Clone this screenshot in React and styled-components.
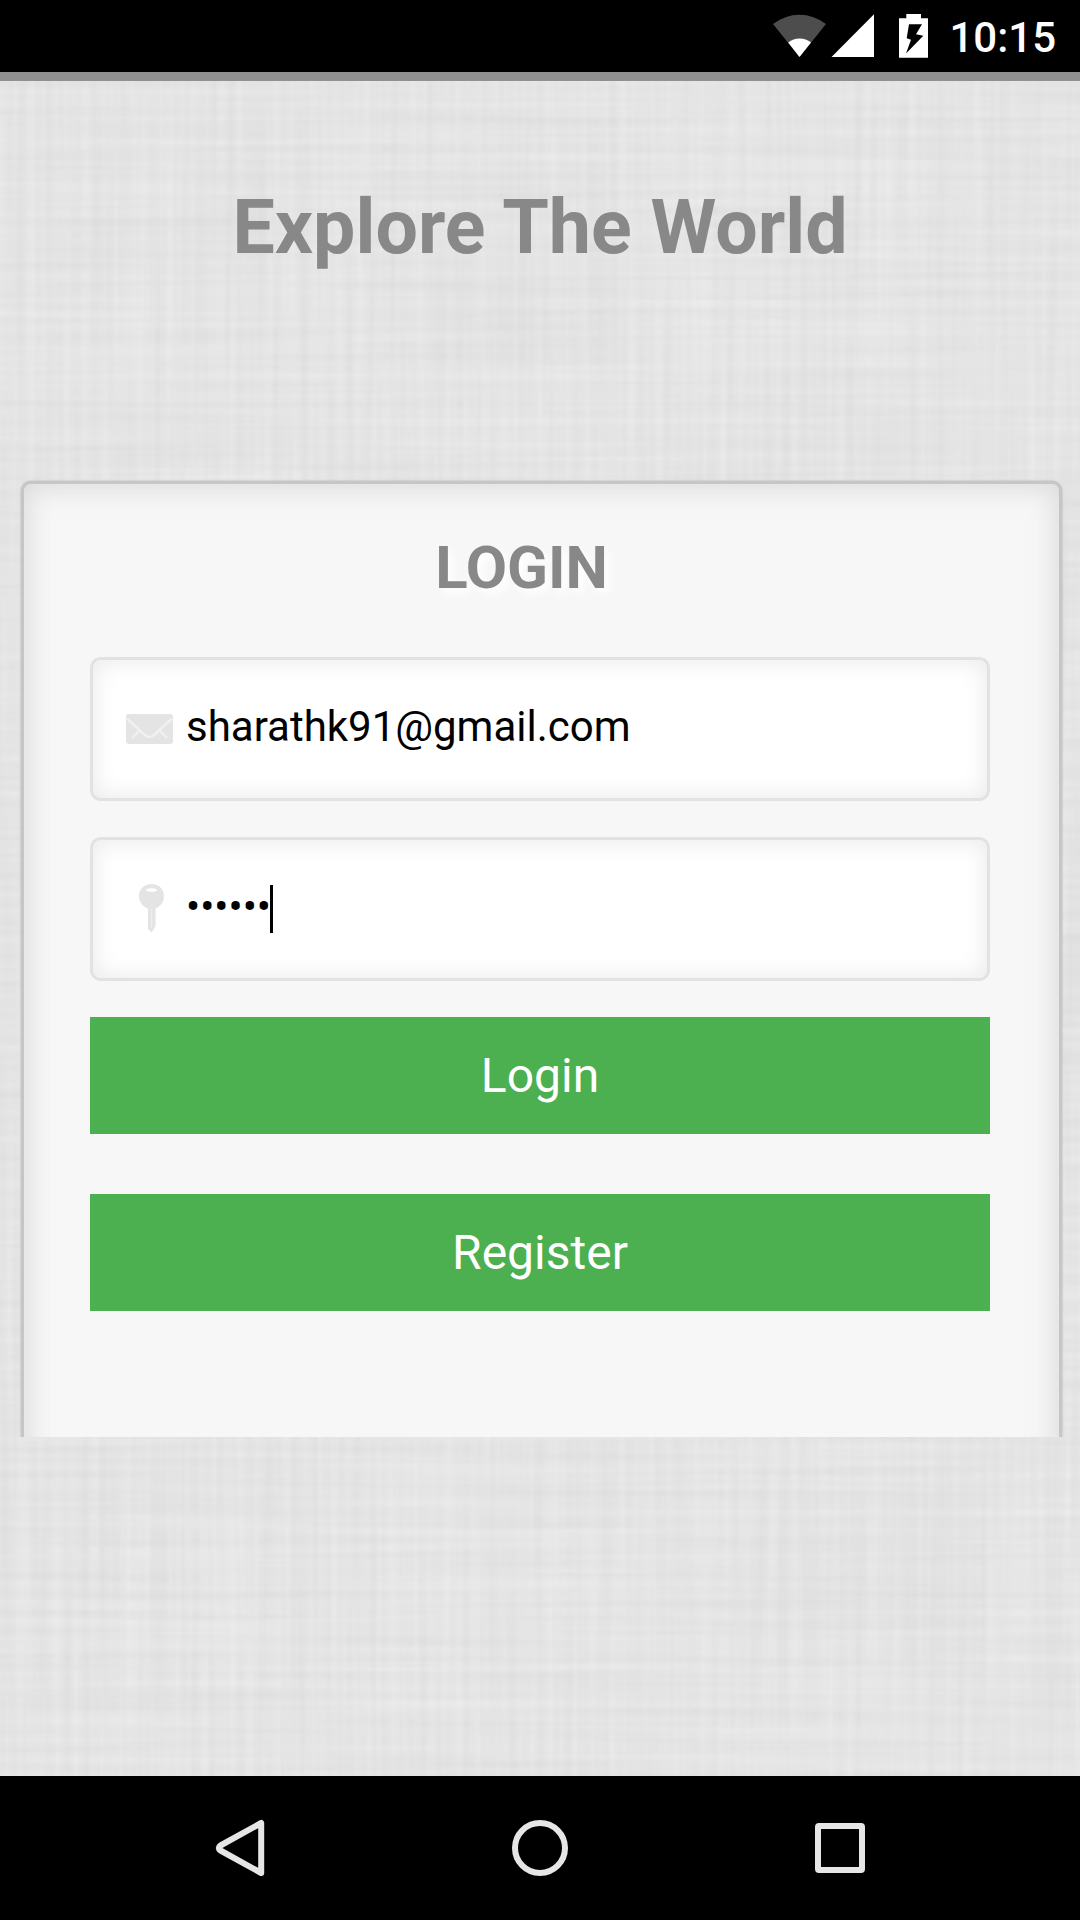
import React from "react";
import styled, { createGlobalStyle } from "styled-components";

const GlobalStyle = createGlobalStyle`
  *, *::before, *::after { box-sizing: border-box; }
  body {
    margin: 0;
    background: #000;
    font-family: Roboto, "Liberation Sans", sans-serif;
  }
`;

const Screen = styled.div`
  display: flex;
  flex-direction: column;
  width: 1080px;
  height: 1920px;
  overflow: hidden;
`;

const StatusBar = styled.header`
  display: flex;
  align-items: center;
  justify-content: flex-end;
  height: 72px;
  padding-right: 24px;
  background: #000;
`;

const StatusIcons = styled.svg`
  width: 156px;
  height: 72px;
  margin-right: 20px;
`;

const Clock = styled.time`
  color: #fff;
  font-size: 42px;
  font-weight: 500;
  line-height: 48px;
  padding-top: 3px;
`;

const Page = styled.main`
  position: relative;
  isolation: isolate;
  display: flex;
  flex-direction: column;
  height: 1704px;
  border-top: 9px solid #909090;
  background: #e4e4e4;
`;

const Linen = styled.svg`
  position: absolute;
  inset: 0;
  z-index: -1;
  width: 100%;
  height: 100%;
`;

const Title = styled.h1`
  margin: 102px 0 0;
  height: 88px;
  color: #888;
  font-size: 75.3px;
  font-weight: 700;
  line-height: 88px;
  text-align: center;
`;

const CardClip = styled.section`
  height: 962px;
  margin-top: 204px;
  padding: 6px 18px 0 21px;
  overflow: hidden;
`;

const Card = styled.form`
  display: flex;
  flex-direction: column;
  width: 1041px;
  height: 1010px;
  padding: 49px 69px 0 66px;
  border: 3px solid #c6c6c6;
  border-radius: 10px;
  background: #f7f7f7;
  box-shadow: 0 0 2px rgba(100, 100, 100, 0.45),
    inset 0 0 24px 6px rgba(200, 200, 200, 0.55);
`;

const Heading = styled.h2`
  margin: 0 37px 0 0;
  height: 70px;
  color: #888;
  font-size: 60px;
  font-weight: 700;
  line-height: 70px;
  text-align: center;
  text-shadow: 5px 5px 8px #fff;
`;

const Field = styled.label`
  display: flex;
  align-items: center;
  height: 144px;
  margin-top: ${(p) => p.$gap}px;
  padding-left: 30px;
  border: 3px solid #e2e2e2;
  border-radius: 11px;
  background: #fff;
  box-shadow: inset 0 0 21px 3px rgba(0, 0, 0, 0.08);
`;

const FieldIcon = styled.svg`
  width: 54px;
  height: 54px;
  margin-right: 9px;
`;

const Value = styled.span`
  color: #000;
  font-size: 42px;
  line-height: 48px;
  padding-bottom: 4px;
`;

const Caret = styled.span`
  width: 3px;
  height: 48px;
  margin-left: -1px;
  background: #000;
`;

const Button = styled.button`
  height: 117px;
  margin: ${(p) => p.$gap}px 0 0;
  padding: 1px 0 0;
  border: 0;
  background: #4caf50;
  color: #fff;
  font-family: inherit;
  font-size: 48px;
  line-height: 56px;
`;

const NavBar = styled.nav`
  display: flex;
  align-items: center;
  justify-content: center;
  gap: 228px;
  height: 144px;
  background: #000;
`;

const NavIcon = styled.svg`
  width: 72px;
  height: 72px;
  fill: none;
  stroke: #e6e6e6;
  stroke-linejoin: round;
`;

function Texture() {
  return (
    <Linen aria-hidden="true">
      <filter
        id="linen"
        x="0"
        y="0"
        width="100%"
        height="100%"
        colorInterpolationFilters="sRGB"
      >
        <feTurbulence type="fractalNoise" baseFrequency="0.11 0.003" numOctaves="2" seed="4" result="warp" />
        <feTurbulence type="fractalNoise" baseFrequency="0.003 0.11" numOctaves="2" seed="9" result="weft" />
        <feComposite in="warp" in2="weft" operator="arithmetic" k2="0.5" k3="0.5" />
        <feColorMatrix
          type="matrix"
          values="0.09 0 0 0 0.85  0.09 0 0 0 0.85  0.09 0 0 0 0.85  0 0 0 0 1"
        />
      </filter>
      <rect width="100%" height="100%" filter="url(#linen)" />
    </Linen>
  );
}

export default function App() {
  return (
    <Screen>
      <GlobalStyle />
      <StatusBar>
        <StatusIcons viewBox="773 0 156 72">
          <path d="M799.5 57 L773 24 A43 43 0 0 1 826 24Z" fill="#4d4d4d" />
          <path d="M799.5 57 L788.2 42.5 A18 18 0 0 1 811 42.5Z" fill="#fff" />
          <path d="M831.5 57 L874 14.3 V57Z" fill="#fff" />
          <path d="M906.3 14 H921 V18.2 H928 V57.7 H899 V18.2 H906.3Z" fill="#fff" />
          <path d="M909 24.3 H922 L916 34.3 L923.3 35.7 L906 53.5 L911 39.8 L906.7 38.3Z" fill="#000" />
        </StatusIcons>
        <Clock>10:15</Clock>
      </StatusBar>

      <Page>
        <Texture />
        <Title>Explore The World</Title>
        <CardClip>
          <Card>
            <Heading>LOGIN</Heading>
            <Field $gap={54}>
              <FieldIcon viewBox="0 0 54 54">
                <rect x="3" y="12" width="47" height="30" rx="3" fill="#e4e4e4" />
                <path
                  d="M4 16.5 L21 32 Q26.5 38 32 32 L49 16.5 M9 36 L16 29 M44 36 L37 29"
                  fill="none"
                  stroke="#f1f1f1"
                  strokeWidth="2.4"
                />
              </FieldIcon>
              <Value>sharathk91@gmail.com</Value>
            </Field>
            <Field $gap={36}>
              <FieldIcon viewBox="0 0 54 54">
                <path
                  d="M28.5 2 C36 2 41 7.5 41 14 C41 20 37.5 24.5 32.5 26.500 V44 L28.8 50.5 L25 47 V26.500 C19.5 24.5 16 20 16 14 C16 7.5 21 2 28.5 2Z"
                  fill="#e4e4e4"
                />
                <ellipse cx="28.5" cy="8" rx="5.5" ry="1.8" fill="#fff" />
                <path d="M28.5 27 V46" stroke="#ededed" strokeWidth="1.5" />
              </FieldIcon>
              <Value>••••••</Value>
              <Caret />
            </Field>
            <Button type="button" $gap={36}>Login</Button>
            <Button type="button" $gap={60}>Register</Button>
          </Card>
        </CardClip>
      </Page>

      <NavBar>
        <NavIcon viewBox="204 1812 72 72" strokeWidth="6">
          <path d="M261.2 1823 V1873 L220.5 1850.5 Q217 1848 220.5 1845.5Z" />
        </NavIcon>
        <NavIcon viewBox="504 1812 72 72" strokeWidth="6">
          <circle cx="540" cy="1848" r="25" />
        </NavIcon>
        <NavIcon viewBox="804 1812 72 72" strokeWidth="6">
          <rect x="818" y="1826" width="44" height="44" rx="1" />
        </NavIcon>
      </NavBar>
    </Screen>
  );
}
